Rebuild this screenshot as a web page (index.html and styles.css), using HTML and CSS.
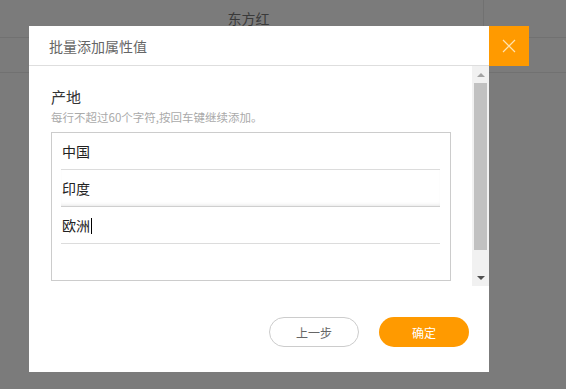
FILE: index.html
```html
<!DOCTYPE html>
<html lang="zh-CN">
<head>
    <meta charset="UTF-8">
    <meta name="viewport" content="width=device-width, initial-scale=1.0">
    <title>批量添加属性值</title>
    <link rel="stylesheet" href="styles.css">
</head>
<body>
    <div class="page">
        <div class="row">
            <div class="cell cell-main">东方红</div>
            <div class="cell cell-side"></div>
        </div>
        <div class="row row-second">
            <div class="cell cell-main"></div>
            <div class="cell cell-side"></div>
        </div>
    </div>

    <div class="modal">
        <div class="modal-header">
            <span class="modal-title">批量添加属性值</span>
            <button class="close-btn" aria-label="关闭">
                <svg width="14" height="14" viewBox="0 0 14 14">
                    <path d="M1 1 L13 13 M13 1 L1 13" stroke="#ffe3b0" stroke-width="1.2" fill="none"/>
                </svg>
            </button>
        </div>

        <div class="modal-body">
            <div class="body-content">
                <div class="field-label">产地</div>
                <div class="field-hint">每行不超过60个字符,按回车键继续添加。</div>
                <div class="value-box">
                    <div class="value-row">中国</div>
                    <div class="value-row value-row-shadow">印度</div>
                    <div class="value-row">欧洲<span class="caret"></span></div>
                </div>
            </div>
            <!-- drawn scrollbar -->
            <div class="scrollbar">
                <div class="sb-btn"><span class="arrow-up"></span></div>
                <div class="sb-track">
                    <div class="sb-thumb"></div>
                </div>
                <div class="sb-btn"><span class="arrow-down"></span></div>
            </div>
        </div>

        <div class="modal-footer">
            <button class="btn btn-prev">上一步</button>
            <button class="btn btn-ok">确定</button>
        </div>
    </div>
</body>
</html>
```

FILE: styles.css
```css
body {
    margin: 0;
    background: #7b7b7b;
    font-family: "Noto Sans CJK SC", "Noto Sans", sans-serif;
    width: 566px;
    height: 389px;
    overflow: hidden;
}
.page {
    width: 566px;
}
.row {
    display: flex;
    height: 37px;
    border-bottom: 1px solid #717171;
}
.row-second {
    height: 34px;
}
.cell {
    font-size: 14px;
    line-height: 37px;
    color: #3a3a3a;
}
.cell-main {
    width: 484px;
    padding-left: 14px;
    box-sizing: border-box;
    text-align: center;
    border-right: 1px solid #717171;
}
.cell-side {
    flex: 1;
}

/* Modal */
.modal {
    position: fixed;
    left: 29px;
    top: 26px;
    width: 460px;
    height: 346px;
    background: #fff;
    display: flex;
    flex-direction: column;
}
.modal-header {
    position: relative;
    height: 39px;
    border-bottom: 1px solid #dedede;
    display: flex;
    align-items: center;
    padding-left: 20px;
}
.modal-title {
    font-size: 14px;
    color: #666;
    line-height: 20px;
}
.close-btn {
    position: absolute;
    right: -40px;
    top: 0;
    width: 40px;
    height: 40px;
    border: none;
    padding: 0;
    background: #ff9a00;
    display: flex;
    align-items: center;
    justify-content: center;
    cursor: pointer;
}
.close-btn svg {
    display: block;
}

.modal-body {
    height: 220px;
    display: flex;
}
.body-content {
    flex: 1;
    overflow: hidden;
    padding: 20px 0 0 22px;
}

/* Scrollbar */
.scrollbar {
    width: 17px;
    background: #f1f1f1;
    display: flex;
    flex-direction: column;
}
.sb-btn {
    height: 17px;
    display: flex;
    align-items: center;
    justify-content: center;
}
.arrow-up {
    width: 0;
    height: 0;
    border-left: 4px solid transparent;
    border-right: 4px solid transparent;
    border-bottom: 4px solid #a3a3a3;
}
.arrow-down {
    width: 0;
    height: 0;
    border-left: 4px solid transparent;
    border-right: 4px solid transparent;
    border-top: 4px solid #505050;
}
.sb-track {
    flex: 1;
    padding: 0 2px;
}
.sb-thumb {
    height: 167px;
    background: #c1c1c1;
}

.field-label {
    font-size: 15px;
    line-height: 22px;
    color: #333;
}
.field-hint {
    font-size: 11.5px;
    line-height: 18px;
    color: #aaa;
    margin-bottom: 6px;
}
.value-box {
    width: 400px;
    height: 149px;
    border: 1px solid #ccc;
    box-sizing: border-box;
    padding: 0 10px 0 9px;
}
.value-row {
    height: 36px;
    line-height: 36px;
    border-bottom: 1px solid #dcdcdc;
    font-size: 14px;
    color: #222;
    padding-left: 1px;
}
.value-row-shadow {
    border-bottom-color: #cfcfcf;
    box-shadow: 0 -3px 4px -3px rgba(0, 0, 0, 0.15) inset;
}
.caret {
    display: inline-block;
    width: 1px;
    height: 16px;
    background: #000;
    vertical-align: -3px;
    margin-left: 1px;
}

.modal-footer {
    flex: 1;
    display: flex;
    justify-content: flex-end;
    align-items: flex-start;
    gap: 20px;
    padding: 31px 20px 0 0;
}
.btn {
    width: 90px;
    height: 30px;
    border-radius: 15px;
    font-family: inherit;
    font-size: 12px;
    cursor: pointer;
    padding: 0;
}
.btn-prev {
    background: #fff;
    border: 1px solid #ccc;
    color: #666;
}
.btn-ok {
    background: #ff9a00;
    border: none;
    color: #fff;
}
```
